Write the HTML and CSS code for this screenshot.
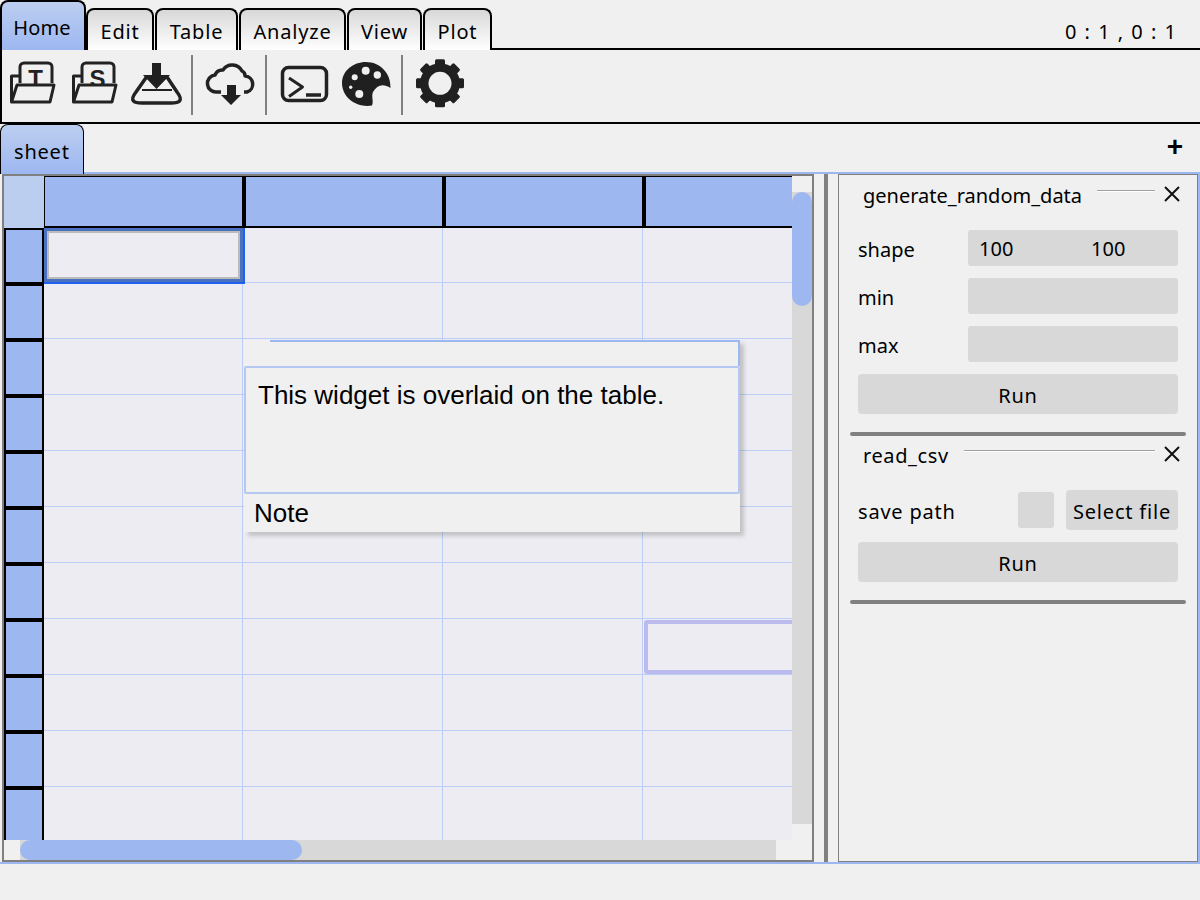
FILE: index.html
```html
<!DOCTYPE html>
<html>
<head>
    <meta charset="utf-8">
    <title>table</title>
    <link rel="stylesheet" href="styles.css">
</head>
<body>
    <div class="menubar">
        <div class="tab tab-active">Home</div>
        <div class="tab tab-edit">Edit</div>
        <div class="tab tab-table">Table</div>
        <div class="tab tab-analyze">Analyze</div>
        <div class="tab tab-view">View</div>
        <div class="tab tab-plot">Plot</div>
        <div class="menubar-rest"><span class="pos">0 : 1 , 0 : 1</span></div>
    </div>

    <div class="toolbar">
        <svg class="tool" viewBox="0 0 62 72">
            <text class="icon-letter" x="33.5" y="37" text-anchor="middle">T</text>
            <path class="icon-line" d="M18 33V17a4 4 0 0 1 4-4H46a4 4 0 0 1 4 4V33M18 26H9.5V52"/>
            <path class="icon-line icon-front" d="M15 35H52L48 52H9.5Z"/>
        </svg>
        <svg class="tool" viewBox="0 0 62 72">
            <text class="icon-letter" x="33.5" y="37" text-anchor="middle">S</text>
            <path class="icon-line" d="M18 33V17a4 4 0 0 1 4-4H46a4 4 0 0 1 4 4V33M18 26H9.5V52"/>
            <path class="icon-line icon-front" d="M15 35H52L48 52H9.5Z"/>
        </svg>
        <svg class="tool" viewBox="0 0 62 72">
            <path class="icon-line icon-thick" d="M20.5 27L10 42C3 51 8 53 16 53H45C53 53 58 51 51 42L41 27"/>
            <path class="icon-line icon-thin" d="M16 40H46"/>
            <path class="icon-fill" d="M26 13H35V25H44L30.5 39L17 25H26Z"/>
        </svg>
        <div class="tool-sep tool-sep-first"></div>
        <svg class="tool" viewBox="0 0 62 72">
            <path class="icon-line icon-thick" d="M22 42H18A8.5 8.5 0 0 1 16 25A8 8 0 0 1 24 20A11 11 0 0 1 43 21A5 5 0 0 1 46 26A8.2 8.2 0 0 1 48 42H45"/>
            <path class="icon-fill" d="M28 35H37V45H42L32 55L22 45H28Z"/>
        </svg>
        <div class="tool-sep"></div>
        <svg class="tool" viewBox="0 0 62 72">
            <rect class="icon-line icon-thick" x="9.5" y="17.5" width="44" height="33" rx="6"/>
            <path class="icon-line" d="M16 28L29.5 37L16 46.5"/>
            <path class="icon-line icon-thick" d="M33 45H48"/>
        </svg>
        <svg class="tool" viewBox="0 0 62 72">
            <path class="icon-fill" d="M31 12C45 12 56 23 55.5 38C48 33 42 35 38 42C36 47 39 51 37 55.5C22 58 7 48 7 33C7 21 18 12 31 12Z"/>
            <circle class="icon-hole" cx="30.7" cy="20.7" r="4"/>
            <circle class="icon-hole" cx="42.3" cy="25" r="3.7"/>
            <circle class="icon-hole" cx="19.7" cy="27.3" r="3"/>
            <circle class="icon-hole" cx="15.7" cy="37.3" r="1.7"/>
            <circle class="icon-hole" cx="24.3" cy="44" r="4"/>
        </svg>
        <div class="tool-sep"></div>
        <svg class="tool" viewBox="0 0 62 72">
            <rect class="icon-fill" x="26" y="9.3" width="10" height="48" rx="1.5"/>
            <rect class="icon-fill" x="26" y="9.3" width="10" height="48" rx="1.5" transform="rotate(45 31 33.3)"/>
            <rect class="icon-fill" x="26" y="9.3" width="10" height="48" rx="1.5" transform="rotate(90 31 33.3)"/>
            <rect class="icon-fill" x="26" y="9.3" width="10" height="48" rx="1.5" transform="rotate(135 31 33.3)"/>
            <circle class="icon-fill" cx="31" cy="33.3" r="20"/>
            <circle class="icon-hole" cx="31" cy="33.3" r="11.5"/>
        </svg>
    </div>

    <div class="tabbar">
        <div class="sheet-tab">sheet</div>
        <div class="tabbar-rest"><span class="add-sheet">+</span></div>
    </div>

    <div class="main">
        <div class="sheet">
            <div class="corner"></div>
            <div class="col-heads">
                <div class="col-head"></div>
                <div class="col-head"></div>
                <div class="col-head"></div>
                <div class="col-head"></div>
            </div>
            <div class="vbar"><div class="vbar-thumb"></div></div>
            <div class="row-heads" id="row_heads"></div>
            <div class="cells" id="cells"></div>
            <div class="hbar"><div class="hbar-thumb"></div></div>

            <div class="note">
                <div class="note-title"></div>
                <div class="note-body">This widget is overlaid on the table.</div>
                <div class="note-label">Note</div>
            </div>
        </div>

        <div class="splitter"></div>

        <div class="panel">
            <div class="op">
                <div class="op-head">
                    <span class="op-title">generate_random_data</span>
                    <span class="op-line"></span>
                    <svg class="op-close" viewBox="0 0 16 16"><path d="M1 1L15 15M15 1L1 15"/></svg>
                </div>
                <div class="op-row">
                    <label>shape</label>
                    <div class="field field-pair"><span>100</span><span>100</span></div>
                </div>
                <div class="op-row">
                    <label>min</label>
                    <div class="field"></div>
                </div>
                <div class="op-row">
                    <label>max</label>
                    <div class="field"></div>
                </div>
                <div class="btn">Run</div>
            </div>
            <div class="op-sep"></div>
            <div class="op">
                <div class="op-head">
                    <span class="op-title op-title-wide">read_csv</span>
                    <span class="op-line"></span>
                    <svg class="op-close" viewBox="0 0 16 16"><path d="M1 1L15 15M15 1L1 15"/></svg>
                </div>
                <div class="file-row">
                    <label>save path</label>
                    <div class="field field-small"></div>
                    <div class="btn btn-file">Select file</div>
                </div>
                <div class="btn">Run</div>
            </div>
            <div class="op-sep"></div>
        </div>
    </div>

    <script type="text/javascript">
        var rowHeads = document.getElementById("row_heads");
        var cells = document.getElementById("cells");
        for (var i = 0; i < 11; i++) {
            var head = document.createElement("div");
            head.className = "row-head";
            rowHeads.appendChild(head);
            for (var j = 0; j < 4; j++) {
                var cell = document.createElement("div");
                cell.className = "cell";
                if (i == 0 && j == 0) cell.className = "cell cell-current";
                if (i == 7 && j == 3) cell.innerHTML = '<div class="cell-range"></div>';
                cells.appendChild(cell);
            }
        }
    </script>
</body>
</html>
```
FILE: styles.css
```css
* {
    box-sizing: border-box;
}

body {
    margin: 0;
    background-color: #F0F0F0;
    font-family: "Noto Sans", "Noto Sans CJK JP", sans-serif;
    font-size: 20px;
    color: #000;
    overflow: hidden;
}

/* menu tabs */
.menubar {
    display: flex;
    align-items: flex-end;
    height: 50px;
    gap: 1px;
}

.tab {
    height: 42px;
    line-height: 44px;
    letter-spacing: 0.8px;
    text-align: center;
    border: 2px solid #000;
    border-bottom: none;
    border-radius: 8px 8px 0 0;
    background: linear-gradient(#D8D8D8, #FFFFFF);
}

.tab-active {
    width: 86px;
    height: 50px;
    margin-right: -1px;
    padding-right: 2px;
    line-height: 52px;
    letter-spacing: 0.2px;
    background: linear-gradient(#BCCEF0, #9DB7F0);
}

.tab-edit {
    width: 68px;
}

.tab-table {
    width: 83px;
}

.tab-analyze {
    width: 107px;
}

.tab-view {
    width: 75px;
}

.tab-plot {
    width: 69px;
}

.menubar-rest {
    flex: 1;
    height: 50px;
    margin-left: -1px;
    padding-right: 24px;
    line-height: 64px;
    text-align: right;
    border-bottom: 2px solid #000;
}

.pos {
    word-spacing: 3px;
}

/* icons */
.toolbar {
    display: flex;
    height: 74px;
    border-left: 2px solid #000;
    border-bottom: 2px solid #000;
}

.tool {
    width: 62px;
    height: 72px;
    flex: none;
}

.tool-sep {
    width: 2px;
    height: 60px;
    margin: 5px 6px 0 4px;
    background-color: #808080;
}

.tool-sep-first {
    margin-left: 3px;
}

.icon-line {
    fill: none;
    stroke: #222;
    stroke-width: 3;
    stroke-linejoin: round;
}

.icon-thick {
    stroke-width: 3.5;
}

.icon-thin {
    stroke-width: 2;
}

.icon-front {
    fill: #F0F0F0;
}

.icon-fill {
    fill: #202020;
}

.icon-hole {
    fill: #F0F0F0;
}

.icon-letter {
    font-family: "Liberation Sans", sans-serif;
    font-size: 24px;
    font-weight: bold;
    fill: #222;
}

/* sheet tabs */
.tabbar {
    display: flex;
    height: 50px;
}

.sheet-tab {
    width: 84px;
    height: 50px;
    padding-left: 13px;
    line-height: 54px;
    letter-spacing: 0.8px;
    border: 1px solid #000;
    border-bottom: none;
    border-radius: 8px 8px 0 0;
    background: linear-gradient(#BCCEF0, #9DB7F0);
}

.tabbar-rest {
    flex: 1;
    padding-right: 17px;
    text-align: right;
    border-bottom: 2px solid #9DB7F0;
}

.add-sheet {
    font-family: "Liberation Sans", sans-serif;
    font-size: 28px;
    font-weight: bold;
    line-height: 46px;
}

/* main area */
.main {
    display: flex;
    height: 690px;
    padding-left: 2px;
    border-bottom: 2px solid #9DB7F0;
}

.sheet {
    position: relative;
    display: grid;
    grid-template-columns: 40px 748px 20px;
    grid-template-rows: 52px 612px 20px;
    width: 812px;
    height: 688px;
    border: 2px solid #808080;
}

.corner {
    background-color: #BCCEF0;
}

.col-heads {
    display: flex;
    overflow: hidden;
}

.col-head {
    flex: none;
    width: 200px;
    background-color: #9DB7F0;
    border: solid #000;
    border-width: 1px 2px 2px 2px;
}

.col-head:first-child {
    border-left-width: 1px;
}

.vbar {
    grid-row: 1 / 3;
    grid-column: 3;
    margin: 16px 0;
    background-color: #D8D8D8;
}

.vbar-thumb {
    height: 114px;
    border-radius: 10px;
    background-color: #9DB7F0;
}

.row-heads {
    overflow: hidden;
}

.row-head {
    height: 56px;
    background-color: #9DB7F0;
    border: 2px solid #000;
}

.cells {
    display: grid;
    grid-template-columns: 199px 200px 200px 200px;
    grid-template-rows: 55px;
    grid-auto-rows: 56px;
    overflow: hidden;
    background-color: #ECECF2;
}

.cell {
    border-right: 1px solid #BCCEF7;
    border-bottom: 1px solid #BCCEF7;
}

.cell-current {
    position: relative;
    z-index: 1;
    margin: 0 -2px -1px 0;
    border: none;
    box-shadow: inset -2px -2px 0 #2060F0, inset 3px 3px 0 #4A70C0, inset -5px -5px 0 #4A70C0, inset 5px 5px 0 #BBBBBB, inset -7px -7px 0 #BBBBBB;
}

.cell-range {
    width: 200px;
    height: 54px;
    margin: 1px 0 0 1px;
    border: 4px solid #BBBBEE;
    border-radius: 3px;
}

.hbar {
    grid-column: 1 / 3;
    margin: 0 16px;
    background-color: #D8D8D8;
}

.hbar-thumb {
    width: 282px;
    height: 20px;
    border-radius: 10px;
    background-color: #9DB7F0;
}

/* overlay */
.note {
    position: absolute;
    left: 240px;
    top: 164px;
    width: 496px;
    height: 192px;
    background-color: #F0F0F0;
    box-shadow: 4px 4px 4px rgba(0, 0, 0, 0.18);
}

.note-title {
    height: 26px;
    margin-left: 26px;
    border-top: 2px solid #9DB7F0;
    border-right: 2px solid #9DB7F0;
}

.note-body {
    height: 128px;
    padding: 12px 12px;
    border: 2px solid #B4C8F2;
    border-radius: 2px;
    font-family: "Liberation Sans", sans-serif;
    font-size: 26px;
    line-height: 30px;
}

.note-label {
    padding-left: 10px;
    font-family: "Liberation Sans", sans-serif;
    font-size: 26px;
    line-height: 38px;
}

.splitter {
    width: 4px;
    height: 688px;
    margin: 0 10px;
    background-color: #808080;
}

/* right panel */
.panel {
    width: 360px;
    height: 688px;
    padding-top: 1px;
    border: 1px solid #808080;
    box-shadow: 2px 0 0 #9DB7F0;
}

.op {
    display: flex;
    flex-direction: column;
    gap: 12px;
    padding: 0 19px;
}

.op-head {
    display: flex;
    height: 40px;
    margin: 0 -19px 2px -19px;
    padding: 0 17px 0 24px;
}

.op-title {
    line-height: 40px;
}

.op-title-wide {
    letter-spacing: 0.6px;
}

.op-line {
    flex: 1;
    height: 2px;
    margin: 14px 9px 0 15px;
    background-color: #A0A0A0;
    border-bottom: 1px solid #FFF;
}

.op-close {
    width: 16px;
    height: 16px;
    margin-top: 10px;
    fill: none;
    stroke: #111;
    stroke-width: 2;
}

.op-row {
    display: grid;
    grid-template-columns: 110px 1fr;
    align-items: center;
}

.op-row label,
.file-row label {
    padding-top: 2px;
}

.file-row {
    display: flex;
    align-items: center;
    gap: 12px;
}

.file-row label {
    flex: 1;
    letter-spacing: 0.8px;
}

.field {
    height: 36px;
    padding: 0 11px;
    line-height: 37px;
    border-radius: 3px;
    background-color: #D8D8D8;
}

.field-pair {
    display: grid;
    grid-template-columns: 112px 1fr;
}

.field-small {
    width: 36px;
}

.btn {
    height: 40px;
    line-height: 43px;
    letter-spacing: 0.8px;
    text-align: center;
    border-radius: 4px;
    background-color: #D8D8D8;
}

.btn-file {
    width: 112px;
    padding-left: 7px;
    text-align: left;
    overflow: hidden;
    white-space: nowrap;
}

.op-sep {
    height: 4px;
    margin: 18px 11px 0 11px;
    border-radius: 2px;
    background-color: #808080;
}
```
